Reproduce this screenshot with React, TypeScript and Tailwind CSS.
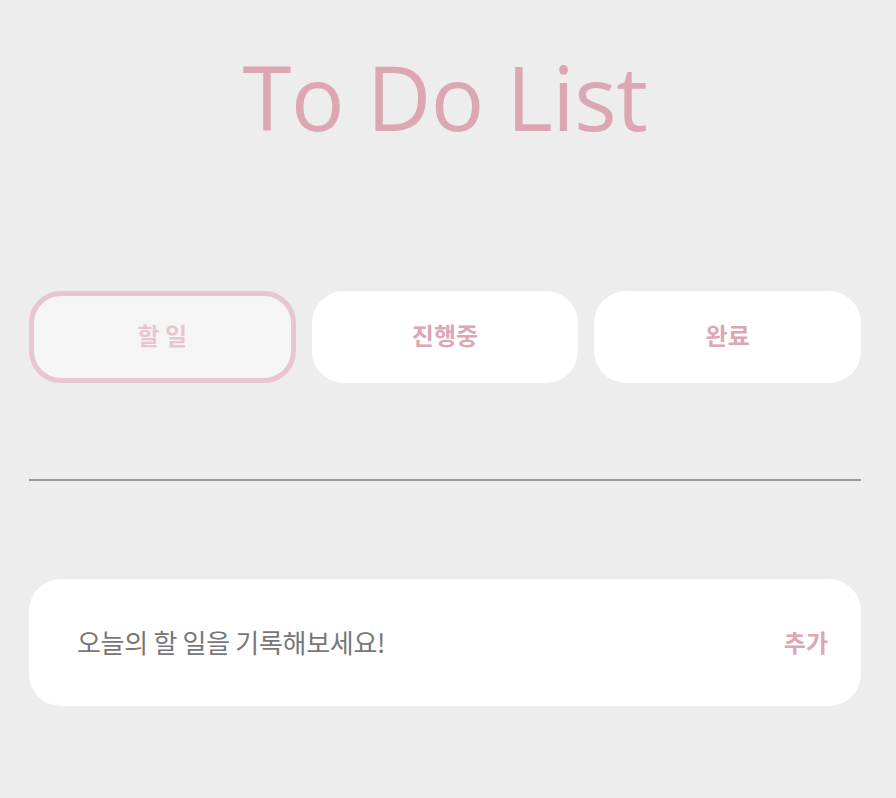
import React from "react";

export default function App() {
  const font = { fontFamily: '"Noto Sans CJK KR", "Noto Sans", sans-serif' };
  return (
    <div className="min-h-[798px] w-full bg-[#ededed]" style={font}>
      <div className="flex w-[832px] flex-col pl-[29px] box-content">
        <h1
          className="mt-[37px] text-center text-[89px] font-normal leading-[120px] tracking-[-0.5px] text-[#dca7b3]"
          style={{ fontFamily: '"Open Sans", "Noto Sans", sans-serif' }}
        >
          To Do List
        </h1>
        <div className="mt-[134px] grid grid-cols-3 gap-4">
          <button className="flex h-[92px] items-center justify-center rounded-[32px] border-[5px] border-[#e7c6cf] bg-[#f5f5f5] pb-[4px] text-[24px] font-bold text-[#e8c5ce]">
            할 일
          </button>
          <button className="flex h-[92px] items-center justify-center rounded-[32px] bg-white pb-[4px] text-[24px] font-bold text-[#dca7b3]">
            진행중
          </button>
          <button className="flex h-[92px] items-center justify-center rounded-[32px] bg-white pb-[4px] text-[24px] font-bold text-[#dca7b3]">
            완료
          </button>
        </div>
        <div className="mt-[96px] h-[2px] w-full bg-[#999999]" />
        <div className="mt-[98px] flex h-[127px] items-center justify-between rounded-[32px] bg-white pb-[2px] pl-[48px] pr-[33px]">
          <span className="text-[26px] tracking-[-0.3px] text-[#777777]">오늘의 할 일을 기록해보세요!</span>
          <span className="text-[24px] font-bold text-[#dca7b3]">추가</span>
        </div>
      </div>
    </div>
  );
}
